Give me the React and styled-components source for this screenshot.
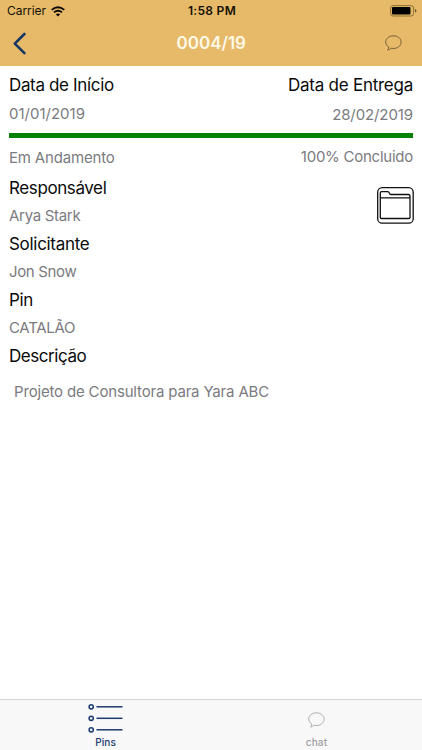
import React from "react";
import styled, { createGlobalStyle } from "styled-components";

const Global = createGlobalStyle`
  * { box-sizing: border-box; }
  html, body { margin: 0; background: #fff; }
  body { font-family: Inter, "Liberation Sans", sans-serif; overflow: hidden; }
  svg { display: block; flex: none; }
`;

const Screen = styled.div`
  width: 422px;
  height: 750px;
  display: flex;
  flex-direction: column;
  background: #fff;
`;

const Header = styled.header`
  height: 66px;
  flex: none;
  background: #e6ba69;
`;

const StatusBar = styled.div`
  height: 22px;
  display: grid;
  grid-template-columns: 1fr auto 1fr;
  align-items: center;
  padding: 0 5px 0 7px;
  color: #140f05;
`;

const StatusGroup = styled.div`
  display: flex;
  align-items: center;
  gap: 5px;
  justify-content: ${(p) => (p.$end ? "flex-end" : "flex-start")};
`;

const StatusText = styled.span`
  font-size: 12px;
  line-height: 22px;
  font-weight: ${(p) => (p.$strong ? 600 : 400)};
  letter-spacing: ${(p) => p.$spacing || "0"};
`;

const NavBar = styled.div`
  height: 43px;
  display: grid;
  grid-template-columns: 1fr auto 1fr;
  align-items: center;
  padding: 0 20.5px 0 12px;
`;

const NavTitle = styled.h1`
  margin: 0;
  padding-left: 9px;
  font-size: 17px;
  line-height: 43px;
  font-weight: 600;
  letter-spacing: 0;
  color: #fff9e6;
`;

const IconButton = styled.button`
  padding: 0;
  border: 0;
  background: none;
  justify-self: ${(p) => p.$side};
`;

const Content = styled.main`
  flex: 1;
  padding: 5px 9px 0;
`;

const Row = styled.div`
  display: flex;
  justify-content: space-between;
  align-items: flex-start;
  margin-top: ${(p) => p.$top || "0"};
`;

const Label = styled.div`
  font-size: 17px;
  line-height: 28px;
  letter-spacing: ${(p) => p.$spacing || "-0.35px"};
  color: #0a0a0a;
  white-space: nowrap;
`;

const Value = styled.div`
  font-size: 15px;
  line-height: 28px;
  letter-spacing: ${(p) => p.$spacing || "-0.1px"};
  margin-top: ${(p) => p.$top || "0"};
  padding-left: ${(p) => p.$indent || "0"};
  color: #7b7b80;
  white-space: nowrap;
`;

const Progress = styled.div`
  height: 5px;
  margin: 4px 0 5px;
  background: #068207;
`;

const FolderButton = styled.button`
  width: 37px;
  height: 37px;
  margin: 13px -1px 0 0;
  padding: 0;
  border: 0;
  background: none;
`;

const TabBar = styled.nav`
  height: 51px;
  flex: none;
  display: grid;
  grid-template-columns: 1fr 1fr;
  background: #f8f8f8;
  border-top: 1px solid #d5d5d5;
`;

const Tab = styled.div`
  display: flex;
  flex-direction: column;
  align-items: center;
  color: ${(p) => (p.$active ? "#1d3a70" : "#a0a0a0")};
`;

const TabIcon = styled.div`
  height: 36px;
  display: flex;
  align-items: center;
  padding-top: ${(p) => p.$drop || "0"};
`;

const TabLabel = styled.span`
  font-size: 10px;
  line-height: 13px;
  font-weight: 500;
  letter-spacing: ${(p) => p.$spacing};
`;

const Wifi = () => (
  <svg width="14" height="11" viewBox="0 0 14 11" fill="none" stroke="#0c0903" strokeWidth="1.9">
    <path d="M.7 3.9Q7 -1.5 13.3 3.9" />
    <path d="M3 6.4Q7 3 11 6.4" />
    <path d="M4.8 8.2Q7 6.6 9.2 8.2L7 10.6Z" fill="#0c0903" stroke="none" />
  </svg>
);

const Battery = () => (
  <svg width="27" height="12" viewBox="0 0 27 12">
    <rect x=".6" y=".6" width="23" height="10.4" rx="2.5" fill="none" stroke="#8c6e35" />
    <rect x="2" y="2" width="18.5" height="7.6" rx="1" fill="#000" />
    <path d="M25 4Q26.5 4.6 26.5 5.8T25 7.6Z" fill="#6f5728" />
  </svg>
);

const Bubble = ({ color }) => (
  <svg width="17" height="17" viewBox="0 0 17 17" fill="none" stroke={color} strokeLinejoin="round">
    <path d="M3.7 11.9C1.8 10.7.7 9 .7 7.1.7 3.6 4.1.8 8.4.8s7.7 2.8 7.7 6.3-3.4 6.4-7.7 6.4c-.8 0-1.6-.1-2.4-.3-.9.9-2 1.7-3.4 1.8.8-.8 1.2-1.9 1.1-3.1Z" />
  </svg>
);

const Back = () => (
  <svg width="15" height="23" viewBox="0 0 15 23" fill="none" stroke="#183765" strokeWidth="2.6" strokeLinecap="round" strokeLinejoin="round">
    <path d="M12.4 2L2.8 11.7L12.4 21.2" />
  </svg>
);

const Folder = () => (
  <svg width="37" height="37" viewBox="0 0 37 37" fill="none" stroke="#111" strokeWidth="1.3" strokeLinejoin="round">
    <rect x=".7" y=".7" width="35.5" height="35.5" rx="4.5" />
    <path d="M3.3 10.8V6Q3.3 4.7 4.6 4.7H10.5Q11.5 4.7 12 5.5L13 7.1Q13.2 7.5 14 7.5H31.5Q33 7.5 33 9V30.4Q33 31.5 31.9 31.5H4.4Q3.3 31.5 3.3 30.4V10.8H33" />
  </svg>
);

const List = () => (
  <svg width="35" height="30" viewBox="0 0 35 30" fill="none" stroke="#1d3a70" strokeWidth="1.5">
    {[3.8, 15.3, 26.8].map((y) => (
      <g key={y}>
        <circle cx="3.2" cy={y} r="2.1" />
        <path d={`M8.5 ${y}H34.5`} />
      </g>
    ))}
  </svg>
);

export default function App() {
  return (
    <Screen>
      <Global />
      <Header>
        <StatusBar>
          <StatusGroup>
            <StatusText $spacing="-0.05px">Carrier</StatusText>
            <Wifi />
          </StatusGroup>
          <StatusText $strong $spacing="0.3px">1:58 PM</StatusText>
          <StatusGroup $end>
            <Battery />
          </StatusGroup>
        </StatusBar>
        <NavBar>
          <IconButton $side="start" aria-label="Voltar"><Back /></IconButton>
          <NavTitle>0004/19</NavTitle>
          <IconButton $side="end" aria-label="Chat"><Bubble color="#75603a" /></IconButton>
        </NavBar>
      </Header>
      <Content>
        <Row>
          <Label>Data de Início</Label>
          <Label $spacing="-0.25px">Data de Entrega</Label>
        </Row>
        <Row>
          <Value $top="1px" $spacing="0px">01/01/2019</Value>
          <Value $top="2px">28/02/2019</Value>
        </Row>
        <Progress />
        <Row>
          <Value $top="1px" $spacing="-0.18px">Em Andamento</Value>
          <Value $spacing="-0.25px">100% Concluido</Value>
        </Row>
        <Row $top="2px">
          <div>
            <Label $spacing="-0.4px">Responsável</Label>
            <Value $spacing="-0.3px">Arya Stark</Value>
          </div>
          <FolderButton aria-label="Arquivos"><Folder /></FolderButton>
        </Row>
        <Label $spacing="-0.3px">Solicitante</Label>
        <Value $spacing="-0.35px">Jon Snow</Value>
        <Label>Pin</Label>
        <Value $spacing="-0.3px">CATALÃO</Value>
        <Label $spacing="-0.45px">Descrição</Label>
        <Value $top="8px" $indent="5px" $spacing="-0.17px">Projeto de Consultora para Yara ABC</Value>
      </Content>
      <TabBar>
        <Tab $active>
          <TabIcon><List /></TabIcon>
          <TabLabel $spacing="0.1px">Pins</TabLabel>
        </Tab>
        <Tab>
          <TabIcon $drop="4px"><Bubble color="#adadad" /></TabIcon>
          <TabLabel $spacing="0.2px">chat</TabLabel>
        </Tab>
      </TabBar>
    </Screen>
  );
}
